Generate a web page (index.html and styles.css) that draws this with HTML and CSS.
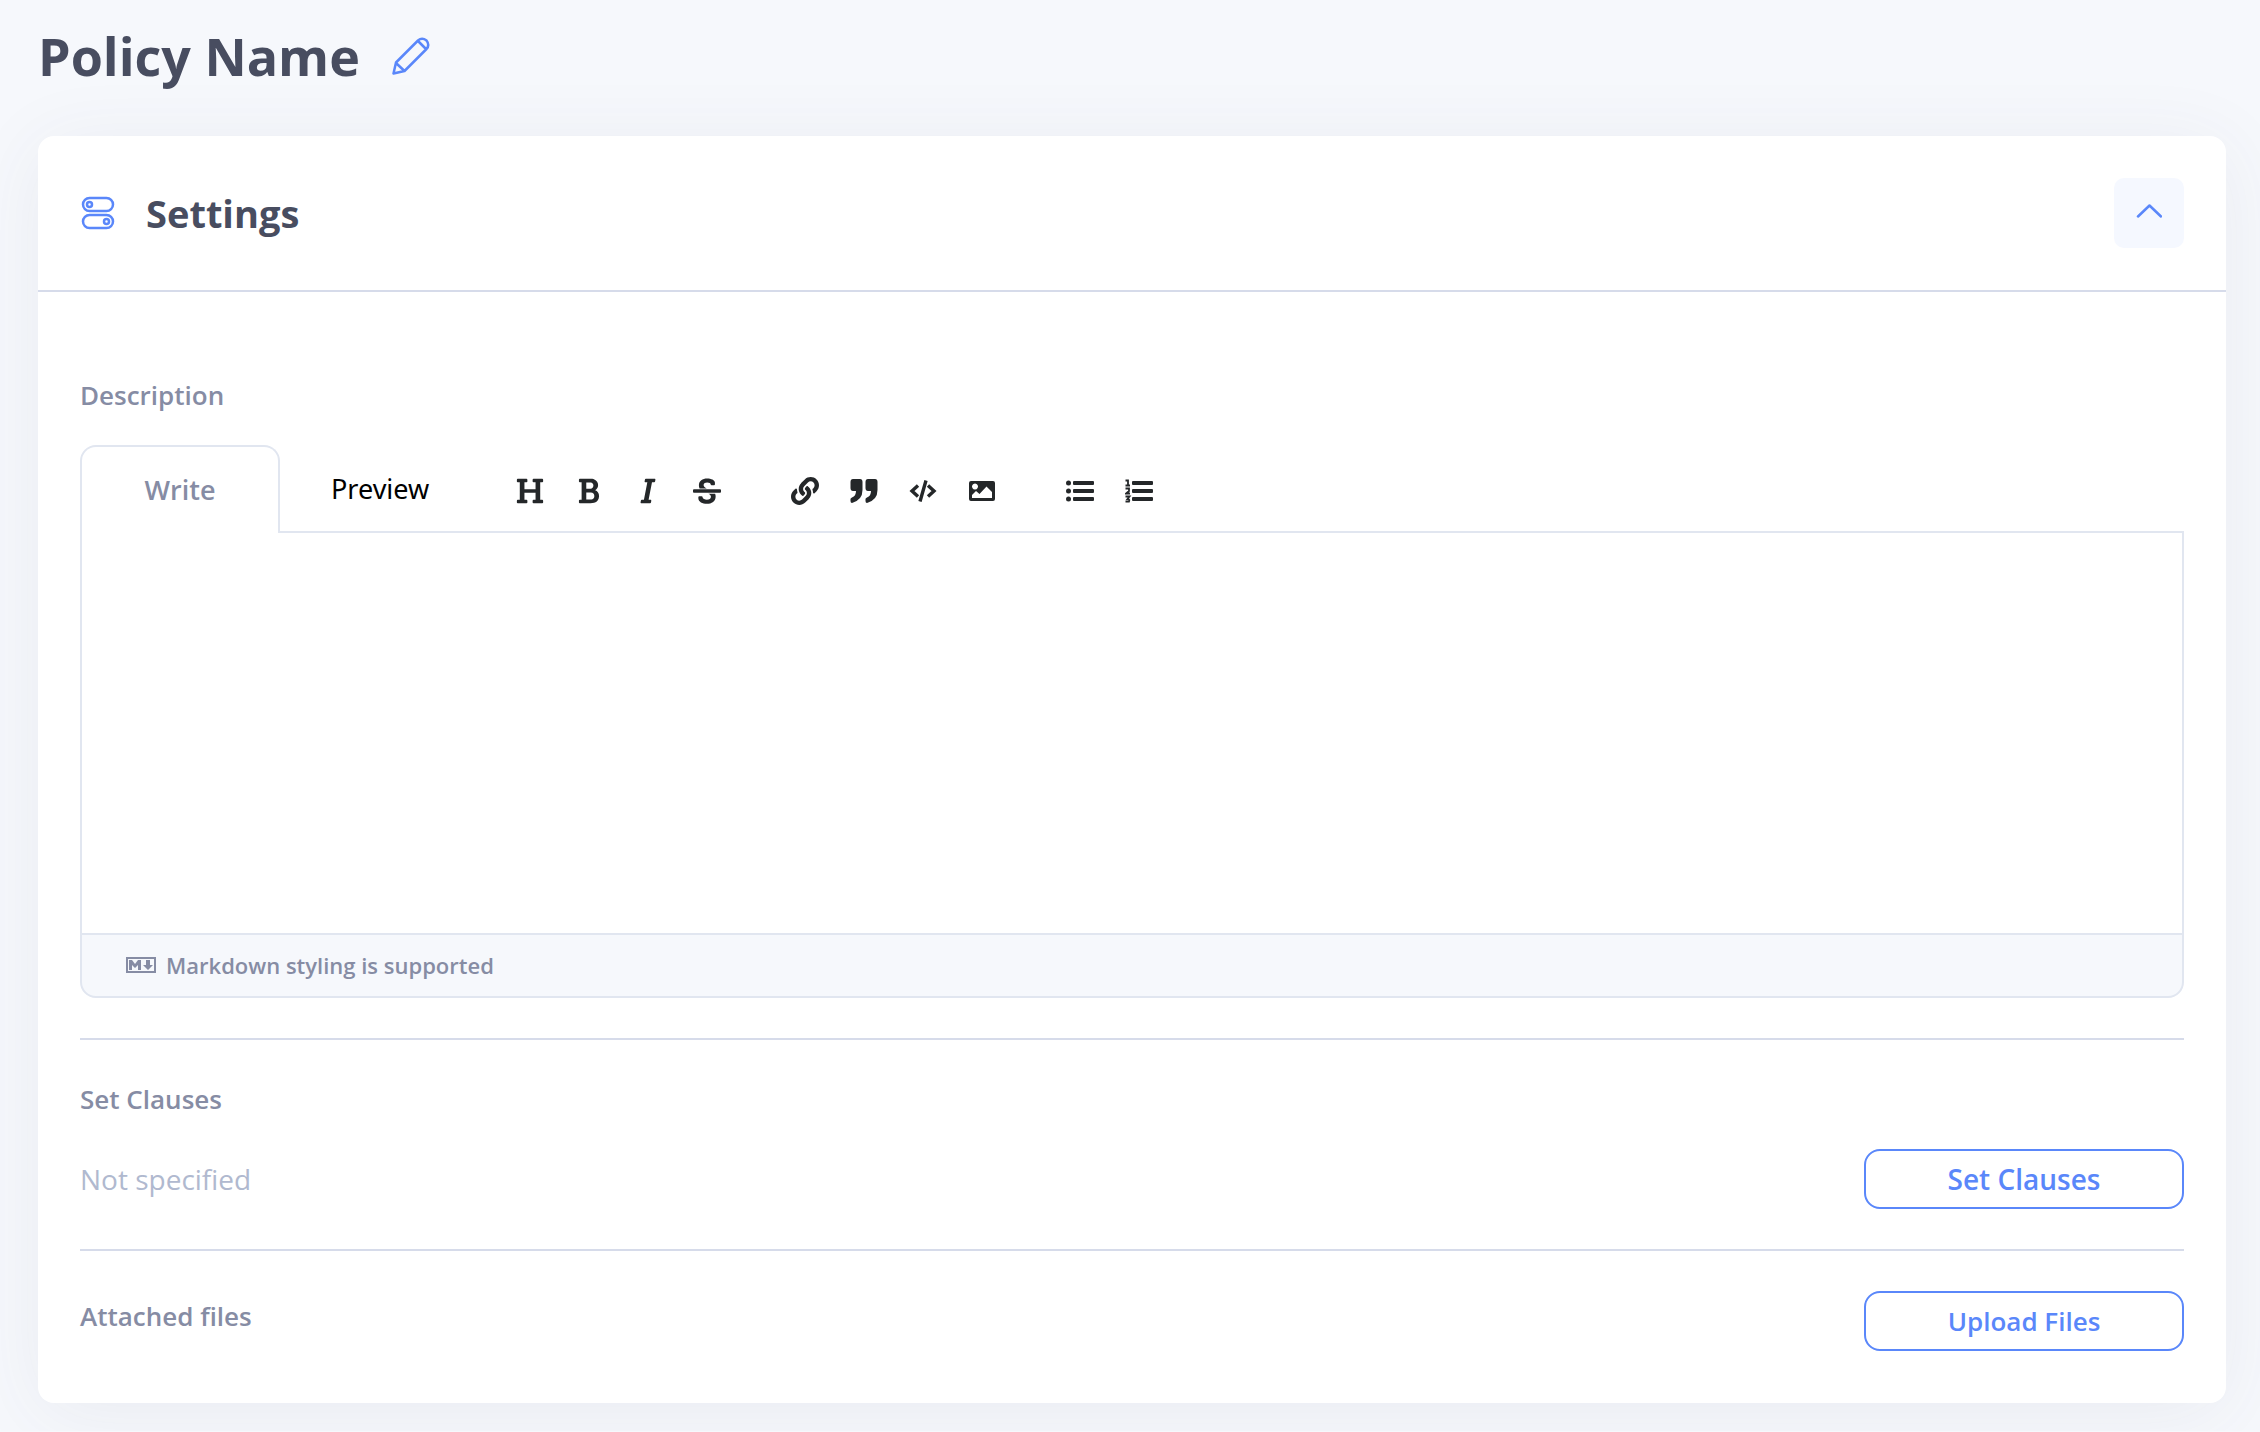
FILE: index.html
```html
<!DOCTYPE html>
<html lang="en">
<head>
<meta charset="utf-8">
<title>Policy Name</title>
<link rel="stylesheet" href="styles.css">
</head>
<body>
<main class="page">
  <header class="page-header">
    <h1 class="page-title">Policy Name</h1>
    <button class="icon-button" type="button" aria-label="Edit name">
      <svg width="38" height="38" viewBox="0 0 38 38" fill="none" stroke="currentColor" stroke-width="2.500" stroke-linejoin="round"><path d="M1.500 36.500 4 25.500 26 3.500Q30 0 34.500 3.500Q38 8 34.500 12L12.500 34ZM26 4 34 12M4 26 12.500 34"/></svg>
    </button>
  </header>

  <section class="card">
    <header class="card-header">
      <svg class="card-icon" width="34" height="34" viewBox="0 0 34 34" fill="none" stroke="currentColor" stroke-width="2.500"><rect x="2" y="2" width="30" height="13" rx="6.500"/><rect x="2" y="19" width="30" height="13" rx="6.500"/><circle cx="8.500" cy="8.500" r="2.500"/><circle cx="25.500" cy="25.500" r="2.500"/></svg>
      <h2 class="card-title">Settings</h2>
      <button class="collapse" type="button" aria-label="Collapse settings">
        <svg width="26" height="18" viewBox="0 0 26 18" fill="none" stroke="currentColor" stroke-width="2.500" stroke-linecap="round" stroke-linejoin="round"><path d="M2 12.500 13.500 1.500 25 12.500"/></svg>
      </button>
    </header>

    <div class="card-body">
      <label class="label" for="description">Description</label>
      <div class="editor">
        <div class="toolbar">
          <button class="tab tab-active" type="button">Write</button>
          <button class="tab" type="button">Preview</button>
          <div class="tools">
            <div class="tool-group">
              <button class="tool" type="button" aria-label="Heading"><svg viewBox="0 0 512 512"><path d="M496 80V48c0-8.837-7.163-16-16-16H320c-8.837 0-16 7.163-16 16v32c0 8.837 7.163 16 16 16h37.621v128H154.379V96H192c8.837 0 16-7.163 16-16V48c0-8.837-7.163-16-16-16H32c-8.837 0-16 7.163-16 16v32c0 8.837 7.163 16 16 16h37.275v320H32c-8.837 0-16 7.163-16 16v32c0 8.837 7.163 16 16 16h160c8.837 0 16-7.163 16-16v-32c0-8.837-7.163-16-16-16h-37.621V288H357.620v128H320c-8.837 0-16 7.163-16 16v32c0 8.837 7.163 16 16 16h160c8.837 0 16-7.163 16-16v-32c0-8.837-7.163-16-16-16h-37.275V96H480c8.837 0 16-7.163 16-16z"/></svg></button>
              <button class="tool" type="button" aria-label="Bold"><svg viewBox="-64 0 512 512"><path d="M304.793 243.891c33.639-18.537 53.657-54.160 53.657-95.693 0-48.236-26.250-87.626-68.626-104.179C265.138 34.010 240.849 32 209.661 32H24c-8.837 0-16 7.163-16 16v33.049c0 8.837 7.163 16 16 16h33.113v318.530H24c-8.837 0-16 7.163-16 16V464c0 8.837 7.163 16 16 16h195.690c24.203 0 44.834-1.289 66.866-7.584C337.520 457.193 376 410.647 376 350.014c0-52.168-26.573-91.684-71.207-106.123zM142.217 100.809h67.444c16.294 0 27.536 2.019 37.525 6.717 15.828 8.479 24.906 26.502 24.906 49.446 0 35.029-20.320 56.790-53.029 56.790h-76.846V100.809zm112.642 305.475c-10.140 4.056-22.677 4.907-31.409 4.907h-81.233V281.943h84.367c39.645 0 63.057 25.380 63.057 63.246 0 28.826-12.998 53.060-34.782 61.095z"/></svg></button>
              <button class="tool" type="button" aria-label="Italic"><svg viewBox="-96 0 512 512"><path d="M204.758 416h-33.849l62.092-320h40.725a16 16 0 0 0 15.704-12.937l6.242-32C297.599 41.184 290.034 32 279.968 32H120.235a16 16 0 0 0-15.704 12.937l-6.242 32C96.362 86.816 103.927 96 113.992 96h33.846l-62.090 320H46.278a16 16 0 0 0-15.704 12.935l-6.245 32C22.402 470.815 29.967 480 40.034 480h158.479a16 16 0 0 0 15.704-12.935l6.245-32c1.927-9.880-5.638-19.065-15.704-19.065z"/></svg></button>
              <button class="tool" type="button" aria-label="Strikethrough"><svg viewBox="0 0 512 512"><path d="M496 288H16c-8.837 0-16-7.163-16-16v-32c0-8.837 7.163-16 16-16h480c8.837 0 16 7.163 16 16v32c0 8.837-7.163 16-16 16zm-214.666 16c27.258 12.937 46.524 28.683 46.524 56.243 0 33.108-28.977 53.676-75.621 53.676-32.325 0-76.874-12.080-76.874-44.271V368c0-8.837-7.164-16-16-16H113.750c-8.836 0-16 7.163-16 16v19.204c0 66.845 77.717 101.820 154.487 101.820 88.578 0 162.013-45.438 162.013-134.424 0-19.815-3.618-36.417-10.143-50.600H281.334zm-30.952-96c-32.422-13.505-56.836-28.946-56.836-59.683 0-33.920 30.901-47.406 64.962-47.406 42.647 0 64.962 16.593 64.962 32.985V136c0 8.837 7.163 16 16 16h45.613c8.837 0 16-7.163 16-16v-30.318c0-52.438-71.725-79.875-142.575-79.875-85.203 0-150.726 40.972-150.726 125.646 0 22.710 4.665 41.176 12.777 56.547h129.823z"/></svg></button>
            </div>
            <div class="tool-group">
              <button class="tool" type="button" aria-label="Link"><svg viewBox="0 0 512 512"><path d="M326.612 185.391c59.747 59.809 58.927 155.698.360 214.590-.110.120-.240.250-.360.370l-67.200 67.200c-59.270 59.270-155.699 59.262-214.960 0-59.270-59.260-59.270-155.700 0-214.960l37.106-37.106c9.840-9.840 26.786-3.300 27.294 10.606.648 17.722 3.826 35.527 9.690 52.721 1.986 5.822.567 12.262-3.783 16.612l-13.087 13.087c-28.026 28.026-28.905 73.660-1.155 101.960 28.024 28.579 74.086 28.749 102.325.510l67.200-67.190c28.191-28.191 28.073-73.757 0-101.830-3.701-3.694-7.429-6.564-10.341-8.569a16.037 16.037 0 0 1-6.947-12.606c-.396-10.567 3.348-21.456 11.698-29.806l21.054-21.055c5.521-5.521 14.182-6.199 20.584-1.731a152.482 152.482 0 0 1 20.522 17.197zM467.547 44.449c-59.261-59.262-155.690-59.270-214.960 0l-67.200 67.200c-.120.120-.250.250-.360.370-58.566 58.892-59.387 154.781.360 214.590a152.454 152.454 0 0 0 20.521 17.196c6.402 4.468 15.064 3.789 20.584-1.731l21.054-21.055c8.350-8.350 12.094-19.239 11.698-29.806a16.037 16.037 0 0 0-6.947-12.606c-2.912-2.005-6.640-4.875-10.341-8.569-28.073-28.073-28.191-73.639 0-101.830l67.200-67.190c28.239-28.239 74.300-28.069 102.325.510 27.750 28.300 26.872 73.934-1.155 101.960l-13.087 13.087c-4.350 4.350-5.769 10.790-3.783 16.612 5.864 17.194 9.042 34.999 9.690 52.721.509 13.906 17.454 20.446 27.294 10.606l37.106-37.106c59.271-59.259 59.271-155.699.001-214.959z"/></svg></button>
              <button class="tool" type="button" aria-label="Quote"><svg viewBox="0 0 28 28"><path id="quote-mark" d="M3 2H10Q12.500 2 12.500 5V13Q12.500 23 2 26Q0.500 26 0.500 24V22Q0.500 21 2 20.500Q6 19 6 14H3Q0.500 14 0.500 11V5Q0.500 2 3 2Z"/><use href="#quote-mark" x="15"/></svg></button>
              <button class="tool" type="button" aria-label="Code"><svg viewBox="0 0 28 28"><path fill="none" stroke="currentColor" stroke-width="3.400" d="M9 8.500 3 14 9 19.500M19 8.500 25 14 19 19.500M17 3.500 11 24.500"/></svg></button>
              <button class="tool" type="button" aria-label="Image"><svg viewBox="0 0 28 28"><path fill-rule="evenodd" d="M3 4H25Q27 4 27 6V22Q27 24 25 24H3Q1 24 1 22V6Q1 4 3 4ZM4 21H24V15L18.500 9.500 11.500 17 8 14 4 18ZM7 6.500a3 3 0 1 0 .010 0Z"/></svg></button>
            </div>
            <div class="tool-group">
              <button class="tool" type="button" aria-label="Bulleted list"><svg viewBox="0 0 28 28"><circle cx="2.500" cy="6" r="2.500"/><circle cx="2.500" cy="14" r="2.500"/><circle cx="2.500" cy="22" r="2.500"/><rect x="7" y="4" width="21" height="4" rx="1"/><rect x="7" y="12" width="21" height="4" rx="1"/><rect x="7" y="20" width="21" height="4" rx="1"/></svg></button>
              <button class="tool" type="button" aria-label="Numbered list"><svg viewBox="0 0 28 28"><rect x="7" y="4" width="21" height="4" rx="1"/><rect x="7" y="12" width="21" height="4" rx="1"/><rect x="7" y="20" width="21" height="4" rx="1"/><path fill="none" stroke="currentColor" stroke-width="1.800" d="M.5 3.500H3V8M.5 8.500H5M.5 11.500H4V14L1 16.500H5M.5 19.500H4.500L2.500 22Q5 22 4 24.500H.5"/></svg></button>
            </div>
          </div>
        </div>
        <textarea class="editor-text" id="description"></textarea>
        <div class="editor-footer">
          <svg width="30" height="16" viewBox="0 0 30 16"><rect x="1" y="1" width="28" height="14" fill="none" stroke="currentColor" stroke-width="2"/><path fill="currentColor" d="M3 13V3H6L9 7 12 3H15V13H12V8L9 11 6 8V13ZM20 3H24V8H27L22 13 17 8H20Z"/></svg>
          <span>Markdown styling is supported</span>
        </div>
      </div>

      <section class="section">
        <h3 class="label">Set Clauses</h3>
        <div class="row row-spaced">
          <p class="empty">Not specified</p>
          <button class="outline-button" type="button">Set Clauses</button>
        </div>
      </section>
      <section class="section">
        <div class="row row-top">
          <h3 class="label">Attached files</h3>
          <button class="outline-button outline-button-compact" type="button">Upload Files</button>
        </div>
      </section>
    </div>
  </section>
</main>
</body>
</html>
```
FILE: styles.css
```css
* { box-sizing: border-box; }
body {
  margin: 0;
  background: #f6f8fc;
  color: #484d60;
  font-family: "Open Sans", "Noto Sans", sans-serif;
}
h1, h2, h3, p { margin: 0; }
button { padding: 0; border: 0; background: none; font: inherit; color: inherit; }
svg { display: block; }
.page { padding: 18px 34px 28px 38px; }
.page-header { display: flex; align-items: center; gap: 32px; margin-bottom: 42px; }
.page-title { font-size: 52px; line-height: 76px; font-weight: 700; }
.icon-button { color: #5a87fa; }
.card {
  background: #fff;
  border-radius: 16px;
  box-shadow: 0 10px 80px rgba(72, 77, 96, 0.07);
}
.card-header {
  display: flex;
  align-items: center;
  padding: 42px;
  border-bottom: 2px solid #d6dbea;
}
.card-icon { margin: 0 31px 0 1px; color: #5a87fa; }
.card-title { font-size: 38px; line-height: 48px; font-weight: 700; }
.collapse {
  display: grid;
  place-items: center;
  width: 70px;
  height: 70px;
  margin-left: auto;
  border-radius: 10px;
  background: #f5f8ff;
  color: #5a87fa;
}
.card-body { padding: 83px 42px 52px; }
.label {
  display: block;
  font-size: 26px;
  line-height: 40px;
  font-weight: 600;
  color: #868ca4;
}
.editor { margin-top: 30px; }
.toolbar { display: flex; height: 88px; border-bottom: 2px solid #e1e6f0; }
.tab {
  height: 86px;
  padding: 0 51px;
  font-family: "Noto Sans", sans-serif;
  font-size: 27px;
  color: #000;
}
.tab-active {
  width: 200px;
  height: 88px;
  padding: 0 0 2px;
  border: 2px solid #e1e6f0;
  border-bottom: 0;
  border-radius: 16px 16px 0 0;
  background: #fff;
  font-family: inherit;
  font-weight: 600;
  color: #868ca4;
}
.tools { display: flex; align-items: center; gap: 39px; padding: 6px 0 0 20px; }
.tool-group { display: flex; }
.tool { display: grid; place-items: center; width: 59px; height: 59px; color: #242729; }
.tool svg { width: 28px; height: 28px; fill: currentColor; }
.editor-text {
  display: block;
  width: 100%;
  height: 400px;
  padding: 20px 44px;
  border: 2px solid #e1e6f0;
  border-width: 0 2px;
  outline: 0;
  resize: none;
  font: inherit;
  font-size: 26px;
}
.editor-footer {
  display: flex;
  align-items: center;
  gap: 10px;
  height: 65px;
  padding: 0 44px 1px;
  border: 2px solid #e1e6f0;
  border-radius: 0 0 16px 16px;
  background: #f6f8fc;
  font-size: 22px;
  line-height: 30px;
  font-weight: 600;
  color: #868ca4;
}
.section { margin-top: 40px; padding-top: 39px; border-top: 2px solid #d6dbea; }
.row { display: flex; align-items: center; justify-content: space-between; }
.row-spaced { margin-top: 30px; }
.row-top { align-items: flex-start; padding-top: 1px; }
.row-top .label { padding-top: 5px; }
.empty { font-size: 28px; line-height: 40px; color: #b0b9cf; }
.outline-button {
  width: 320px;
  height: 60px;
  border: 2px solid #5a87fa;
  border-radius: 16px;
  font-size: 28px;
  font-weight: 600;
  color: #5a87fa;
}
.outline-button-compact { font-size: 26px; }
```
